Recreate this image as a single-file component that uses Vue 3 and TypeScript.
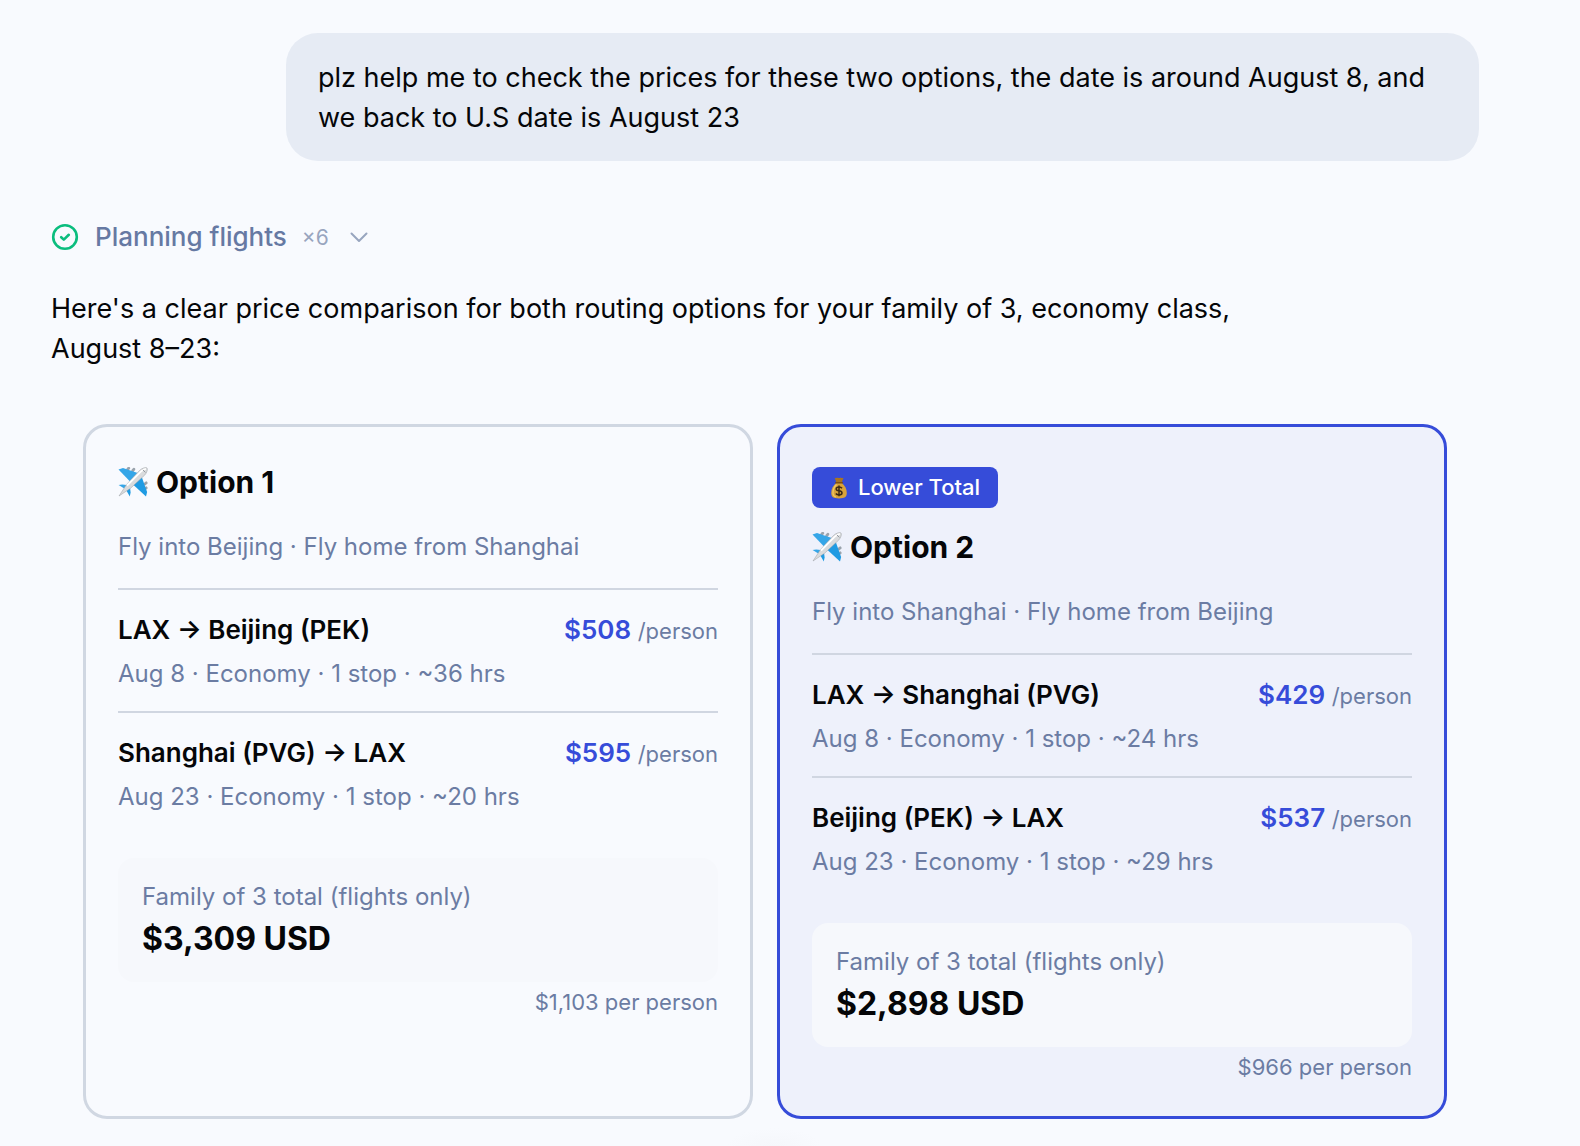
<script setup lang="ts">
interface Leg {
  route: string
  price: string
  details: string
}

interface FlightOption {
  name: string
  summary: string
  badge?: string
  legs: Leg[]
  total: string
  perPerson: string
}

const options: FlightOption[] = [
  {
    name: 'Option 1',
    summary: 'Fly into Beijing · Fly home from Shanghai',
    legs: [
      { route: 'LAX → Beijing (PEK)', price: '$508', details: 'Aug 8 · Economy · 1 stop · ~36 hrs' },
      { route: 'Shanghai (PVG) → LAX', price: '$595', details: 'Aug 23 · Economy · 1 stop · ~20 hrs' },
    ],
    total: '$3,309 USD',
    perPerson: '$1,103 per person',
  },
  {
    name: 'Option 2',
    summary: 'Fly into Shanghai · Fly home from Beijing',
    badge: 'Lower Total',
    legs: [
      { route: 'LAX → Shanghai (PVG)', price: '$429', details: 'Aug 8 · Economy · 1 stop · ~24 hrs' },
      { route: 'Beijing (PEK) → LAX', price: '$537', details: 'Aug 23 · Economy · 1 stop · ~29 hrs' },
    ],
    total: '$2,898 USD',
    perPerson: '$966 per person',
  },
]
</script>

<template>
  <main class="chat">
    <p class="bubble">
      plz help me to check the prices for these two options, the date is around August 8, and we back to U.S date is August 23
    </p>

    <button class="step" type="button">
      <svg class="step-check" viewBox="0 0 28 28" aria-hidden="true">
        <circle cx="14" cy="14" r="11.8" />
        <path d="M10.2 14.2l2.6 2.400 5-4.800" />
      </svg>
      <span class="step-name">Planning flights</span>
      <span class="step-count">×6</span>
      <svg class="step-chevron" viewBox="0 0 20 20" aria-hidden="true">
        <path d="M2.500 6.500l7.500 7.500 7.500-7.500" />
      </svg>
    </button>

    <p class="reply">
      Here's a clear price comparison for both routing options for your family of 3, economy class, August 8–23:
    </p>

    <section class="options">
      <article v-for="option in options" :key="option.name" class="card" :class="{ best: option.badge }">
        <div v-if="option.badge" class="badge">
          <svg class="bag" viewBox="0 0 18 24" aria-hidden="true">
            <path d="M4.6 1.8q1.6.8 2.5-.4 1.8 1 3.6 0 1.2 1.1 2.8.3L11.8 6.5H6.4z" fill="#a87422" />
            <path d="M6.3 7C3.2 9.2 1.2 12.800 1.200 17c0 3.900 2.200 5.400 7.800 5.400s7.800-1.500 7.800-5.400c0-4.200-2-7.800-5.100-10z" fill="#d9a33a" />
            <path d="M6.5 8.500C4 11 2.800 14 3 17.500c.2 2 1.200 3 3 3.500" fill="none" stroke="#f0c966" stroke-width="1.200" />
            <path d="M5.800 6.800h6.600" stroke="#7c4f17" stroke-width="1.600" stroke-linecap="round" />
            <path d="M12 12.300q-1-1.300-3-1.300-2.800 0-2.800 1.900 0 1.500 2.800 1.900 3 .4 3 2.200 0 1.900-3 1.900-2.200 0-3.200-1.400M9 9.600v10.600" fill="none" stroke="#3d2a14" stroke-width="1.500" />
          </svg>
          <span class="badge-text">{{ option.badge }}</span>
        </div>

        <h2 class="title">
          <svg class="plane" viewBox="0 0 30 30" aria-hidden="true">
            <g fill="#9aa3ac">
              <rect x="8" y="0.6" width="4.500" height="2.800" rx="1.200" transform="rotate(-50 10 2)" />
              <rect x="13" y="1.800" width="4.500" height="2.800" rx="1.200" transform="rotate(-50 15 3)" />
              <rect x="25.500" y="15.500" width="4.500" height="2.800" rx="1.200" transform="rotate(-40 27 17)" />
              <rect x="25.500" y="20.500" width="4.500" height="2.800" rx="1.200" transform="rotate(-40 27 22)" />
            </g>
            <path d="M.5 2.600L5 .9 20.500 6.300l-8 8.700z" fill="#35a6e8" />
            <path d="M28 29.400l1.100-4.400L23.600 9.500 15 17.500z" fill="#1f9be3" />
            <path d="M.6 18l3.600-.4 7 .6L8 22.600z" fill="#35a6e8" />
            <path d="M11.800 29.400l.8-3.800-.8-7L7.600 22z" fill="#1f9be3" />
            <path d="M1 29l7.500-11.500L21.500 3.500C24 1 28 0 29 1s0 4.800-2.500 7.300L12.500 21.300z" fill="#d9dbdd" stroke="#9b9fa3" stroke-width=".5" />
            <path d="M9 18.500L22.500 4.800C24.500 2.800 27 1.800 28 2.200" fill="none" stroke="#fff" stroke-width="1.800" />
            <path d="M24.800 2.800l2.600 2.600" stroke="#8a9096" stroke-width=".9" />
          </svg>
          <span>{{ option.name }}</span>
        </h2>
        <p class="summary">{{ option.summary }}</p>

        <div v-for="leg in option.legs" :key="leg.route" class="leg">
          <div class="leg-head">
            <span class="route">{{ leg.route }}</span>
            <span class="price">{{ leg.price }} <small>/person</small></span>
          </div>
          <p class="details">{{ leg.details }}</p>
        </div>

        <div class="total">
          <p class="total-label">Family of 3 total (flights only)</p>
          <p class="total-value">{{ option.total }}</p>
        </div>
        <p class="per-person">{{ option.perPerson }}</p>
      </article>
    </section>
  </main>
</template>

<style>
body {
  margin: 0;
  background: #f8fafe;
}
</style>

<style scoped>
.chat {
  display: flex;
  flex-direction: column;
  align-items: flex-start;
  padding: 33px 101px 27px 51px;
  background: radial-gradient(ellipse 48px 18px at 49% 100%, #f5f7fb, transparent) no-repeat;
  font-family: Inter, "Liberation Sans", sans-serif;
  color: #050608;
}

p,
h2 {
  margin: 0;
}

.bubble {
  box-sizing: border-box;
  align-self: flex-end;
  max-width: 1193px;
  padding: 25px 32px 23px;
  border-radius: 32px;
  background: #e6ebf4;
  font-size: 27px;
  line-height: 40px;
}

.step {
  display: flex;
  align-items: center;
  height: 40px;
  margin-top: 56px;
  padding: 0;
  border: 0;
  background: none;
  color: #6679a3;
  font: inherit;
}

.step-check {
  width: 28px;
  height: 28px;
  fill: none;
  stroke: #0bbd7e;
  stroke-width: 2.6;
  stroke-linecap: round;
  stroke-linejoin: round;
}

.step-name {
  margin-left: 16px;
  padding-bottom: 2px;
  font-size: 26px;
  font-weight: 500;
}

.step-count {
  margin-left: 15px;
  color: #98a5bf;
  font-size: 21px;
}

.step-chevron {
  width: 20px;
  height: 20px;
  margin-left: 20px;
  fill: none;
  stroke: #98a5bf;
  stroke-width: 2;
  stroke-linecap: round;
  stroke-linejoin: round;
}

.reply {
  max-width: 1200px;
  margin-top: 32px;
  font-size: 27px;
  line-height: 40px;
}

.options {
  display: grid;
  grid-template-columns: 1fr 1fr;
  gap: 24px;
  box-sizing: border-box;
  width: 100%;
  margin-top: 55px;
  padding: 0 32px;
}

.card {
  padding: 40px 32px 33px;
  border: 3px solid #d0d7e2;
  border-radius: 24px;
}

.card.best {
  border-color: #364cd9;
  background: #eef1fb;
}

.badge {
  display: flex;
  align-items: center;
  gap: 10px;
  width: fit-content;
  height: 41px;
  margin-bottom: 24px;
  padding: 0 18px;
  border-radius: 8px;
  background: #364cd9;
  color: #fff;
  font-size: 22px;
  font-weight: 500;
}

.badge-text {
  padding-bottom: 2px;
}

.bag {
  width: 18px;
  height: 24px;
}

.title {
  display: flex;
  align-items: center;
  gap: 8px;
  font-size: 30px;
  font-weight: 700;
  line-height: 30px;
}

.plane {
  width: 30px;
  height: 30px;
}

.summary {
  margin: 31px 0 22px;
  color: #6b7ca3;
  font-size: 24px;
  line-height: 38px;
}

.leg {
  padding: 19px 0 18px;
  border-top: 2px solid #d0d6e1;
}

.leg-head {
  display: flex;
  align-items: baseline;
  justify-content: space-between;
  margin-bottom: 4px;
  font-size: 26px;
  font-weight: 600;
  line-height: 42px;
}

.price {
  color: #364cd9;
}

.price small {
  color: #6b7ca3;
  font-size: 22px;
  font-weight: 400;
  line-height: 1;
}

.details {
  color: #6b7ca3;
  font-size: 24px;
  line-height: 38px;
}

.total {
  margin-top: 24px;
  padding: 20px 24px;
  border-radius: 16px;
  background: #f6f8fc;
}

.total-label {
  color: #6b7ca3;
  font-size: 24px;
  line-height: 38px;
}

.total-value {
  font-size: 32px;
  font-weight: 700;
  line-height: 46px;
}

.per-person {
  margin-top: 4px;
  color: #6b7ca3;
  font-size: 22px;
  line-height: 32px;
  text-align: right;
}
</style>
